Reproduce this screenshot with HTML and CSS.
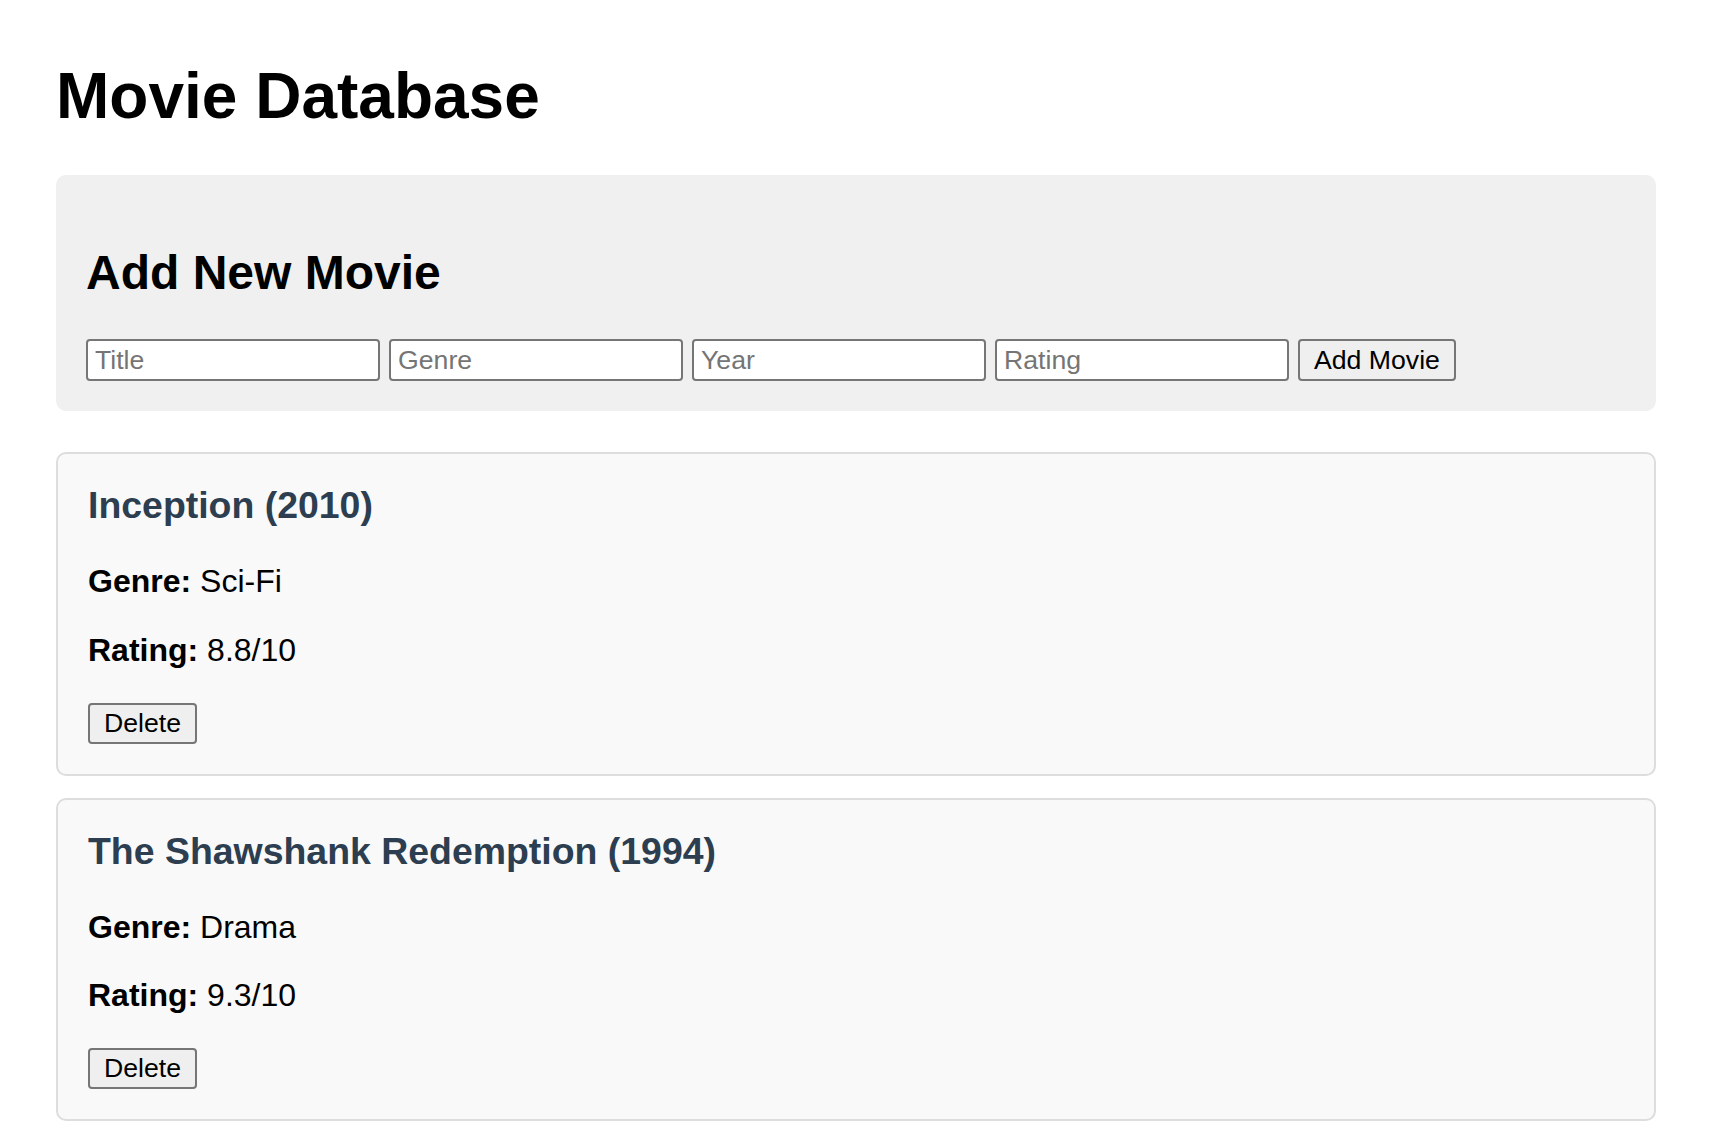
FILE: index.html
```html
<!DOCTYPE html>
<html lang="en">
<head>
<meta charset="utf-8">
<title>Movie Database</title>
<link rel="stylesheet" href="styles.css">
</head>
<body>
<div class="container">
  <h1 class="page-title">Movie Database</h1>

  <section class="add-form">
    <h2 class="form-title">Add New Movie</h2>
    <div class="form-row">
      <input class="field" type="text" placeholder="Title">
      <input class="field" type="text" placeholder="Genre">
      <input class="field" type="text" placeholder="Year">
      <input class="field" type="text" placeholder="Rating">
      <button class="btn btn-add" type="button">Add Movie</button>
    </div>
  </section>

  <div class="movie-list">
    <article class="movie-card">
      <h3 class="movie-title">Inception (2010)</h3>
      <p class="movie-meta"><strong>Genre:</strong> Sci-Fi</p>
      <p class="movie-meta"><strong>Rating:</strong> 8.8/10</p>
      <button class="btn btn-delete" type="button">Delete</button>
    </article>
    <article class="movie-card">
      <h3 class="movie-title">The Shawshank Redemption (1994)</h3>
      <p class="movie-meta"><strong>Genre:</strong> Drama</p>
      <p class="movie-meta"><strong>Rating:</strong> 9.3/10</p>
      <button class="btn btn-delete" type="button">Delete</button>
    </article>
  </div>
</div>
</body>
</html>
```

FILE: styles.css
```css
html, body {
  background: #ffffff;
}

body {
  margin: 16px;
  font-family: "Liberation Sans", Arial, Helvetica, sans-serif;
  font-size: 32px;
  color: #000000;
}

.container {
  max-width: 1600px;
  padding: 0 40px;
}

.page-title {
  font-size: 64px;
  font-weight: bold;
  margin: 43px 0 42px;
}

.add-form {
  background: #f0f0f0;
  border-radius: 10px;
  padding: 30px;
  margin-bottom: 41px;
}

.form-title {
  font-size: 48px;
  font-weight: bold;
  margin: 40px 0 39px;
}

.form-row {
  display: flex;
  gap: 9px;
  align-items: stretch;
}

.field {
  box-sizing: border-box;
  width: 294px;
  height: 42px;
  margin: 0;
  padding: 4px 7px;
  border: 2px solid #767676;
  border-radius: 4px;
  background: #ffffff;
  font-family: "Liberation Sans", Arial, Helvetica, sans-serif;
  font-size: 26.6667px;
  color: #000000;
  outline: none;
}

.field::placeholder {
  color: #757575;
  opacity: 1;
}

.btn {
  box-sizing: border-box;
  height: 42px;
  margin: 0;
  padding: 0 14px;
  border: 2px solid #767676;
  border-radius: 4px;
  background: #efefef;
  font-family: "Liberation Sans", Arial, Helvetica, sans-serif;
  font-size: 26.6667px;
  color: #000000;
}

.btn-delete {
  display: block;
  height: 41px;
  margin-top: 34px;
}

.movie-card {
  background: #f9f9f9;
  border: 2px solid #dddddd;
  border-radius: 10px;
  padding: 30px;
  margin-bottom: 22px;
}

.movie-title {
  font-size: 37.44px;
  font-weight: bold;
  color: #2c3e50;
  margin: 0 0 36px;
}

.movie-meta {
  margin: 0 0 32px;
  line-height: 36.8px;
}
```
